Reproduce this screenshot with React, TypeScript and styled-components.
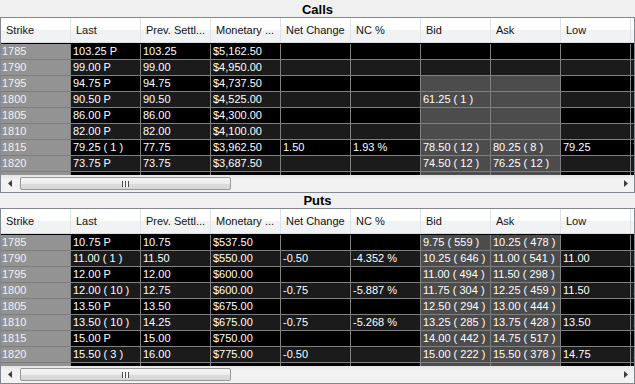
import styled, { createGlobalStyle } from "styled-components"

const GlobalStyle = createGlobalStyle`
  html, body { margin: 0; padding: 0; background: #f0f0f0; }
  body { font-family: "Liberation Sans", Arial, sans-serif; }
`

type Tone = "strike" | "black" | "dark" | "gray"

type row_type = {
    strike: string,
    cells: string[],
    quote: boolean
}

const HEADERS = ["Strike", "Last", "Prev. Settl...", "Monetary ...", "Net Change", "NC %", "Bid", "Ask", "Low", "High"]

const CALLS: row_type[] = [
    { strike: "1785", cells: ["103.25 P", "103.25", "$5,162.50", "", "", "", "", "", ""], quote: false },
    { strike: "1790", cells: ["99.00 P", "99.00", "$4,950.00", "", "", "", "", "", ""], quote: false },
    { strike: "1795", cells: ["94.75 P", "94.75", "$4,737.50", "", "", "", "", "", ""], quote: true },
    { strike: "1800", cells: ["90.50 P", "90.50", "$4,525.00", "", "", "61.25 ( 1 )", "", "", ""], quote: true },
    { strike: "1805", cells: ["86.00 P", "86.00", "$4,300.00", "", "", "", "", "", ""], quote: true },
    { strike: "1810", cells: ["82.00 P", "82.00", "$4,100.00", "", "", "", "", "", ""], quote: true },
    { strike: "1815", cells: ["79.25 ( 1 )", "77.75", "$3,962.50", "1.50", "1.93 %", "78.50 ( 12 )", "80.25 ( 8 )", "79.25", "79.25"], quote: true },
    { strike: "1820", cells: ["73.75 P", "73.75", "$3,687.50", "", "", "74.50 ( 12 )", "76.25 ( 12 )", "", ""], quote: true },
    { strike: "1825", cells: ["69.75 P", "69.75", "$3,487.50", "", "", "", "", "", ""], quote: true },
]

const PUTS: row_type[] = [
    { strike: "1785", cells: ["10.75 P", "10.75", "$537.50", "", "", "9.75 ( 559 )", "10.25 ( 478 )", "", ""], quote: true },
    { strike: "1790", cells: ["11.00 ( 1 )", "11.50", "$550.00", "-0.50", "-4.352 %", "10.25 ( 646 )", "11.00 ( 541 )", "11.00", "11.00"], quote: true },
    { strike: "1795", cells: ["12.00 P", "12.00", "$600.00", "", "", "11.00 ( 494 )", "11.50 ( 298 )", "", ""], quote: true },
    { strike: "1800", cells: ["12.00 ( 10 )", "12.75", "$600.00", "-0.75", "-5.887 %", "11.75 ( 304 )", "12.25 ( 459 )", "11.50", "12.00"], quote: true },
    { strike: "1805", cells: ["13.50 P", "13.50", "$675.00", "", "", "12.50 ( 294 )", "13.00 ( 444 )", "", ""], quote: true },
    { strike: "1810", cells: ["13.50 ( 10 )", "14.25", "$675.00", "-0.75", "-5.268 %", "13.25 ( 285 )", "13.75 ( 428 )", "13.50", "13.50"], quote: true },
    { strike: "1815", cells: ["15.00 P", "15.00", "$750.00", "", "", "14.00 ( 442 )", "14.75 ( 517 )", "", ""], quote: true },
    { strike: "1820", cells: ["15.50 ( 3 )", "16.00", "$775.00", "-0.50", "", "15.00 ( 222 )", "15.50 ( 378 )", "14.75", "15.50"], quote: true },
    { strike: "1825", cells: ["17.00 P", "17.00", "$850.00", "", "", "16.25 ( 310 )", "16.75 ( 402 )", "", ""], quote: true },
]

const Page = styled.div`
    width: 635px;
    height: 384px;
    overflow: hidden;
    display: flex;
    flex-direction: column;
    background: #f0f0f0;
`

const Section = styled.section`
    display: flex;
    flex-direction: column;
`

const Title = styled.div<{ $h: number }>`
    height: ${({ $h }) => $h}px;
    display: flex;
    align-items: center;
    justify-content: center;
    padding-top: ${({ $h }) => ($h > 15 ? 2 : 0)}px;
    box-sizing: border-box;
    font-size: 13px;
    font-weight: bold;
    color: #000;
`

const Frame = styled.div`
    border: 1px solid #828790;
    display: flex;
    flex-direction: column;
    overflow: hidden;
    background: #fff;
`

const HeaderRow = styled.div`
    display: flex;
    height: 24px;
    border-bottom: 1px solid #d9dbde;
    background: linear-gradient(to bottom, #ffffff 0%, #ffffff 48%, #f1f2f4 48%, #f1f2f4 100%);
    overflow: hidden;
`

const HeadCell = styled.div`
    flex: 0 0 70px;
    box-sizing: border-box;
    border-right: 1px solid #dfe2e6;
    padding-left: 5px;
    font-size: 11px;
    line-height: 24px;
    color: #111;
    white-space: nowrap;
    overflow: hidden;
`

const Body = styled.div`
    height: 132px;
    padding-top: 1px;
    box-sizing: border-box;
    background: #000;
    overflow: hidden;
`

const Row = styled.div`
    display: flex;
    height: 16px;
`

const toneColor: Record<Tone, string> = {
    strike: "#939393",
    black: "#000000",
    dark: "#1b1b1b",
    gray: "#4c4c4c",
}

const Cell = styled.div<{ $tone: Tone }>`
    flex: 0 0 70px;
    box-sizing: border-box;
    height: 16px;
    padding-left: ${({ $tone }) => ($tone === "strike" ? 1 : 2)}px;
    border-right: 1px solid #808080;
    border-bottom: 1px solid ${({ $tone }) => ($tone === "strike" ? "#7d7d7d" : "#808080")};
    background: ${({ $tone }) => toneColor[$tone]};
    color: ${({ $tone }) => ($tone === "strike" ? "#f2f2f2" : "#ffffff")};
    font-size: 11px;
    line-height: 15px;
    white-space: nowrap;
    overflow: hidden;
`

const ScrollBar = styled.div`
    height: 17px;
    display: flex;
    align-items: center;
    background: linear-gradient(to bottom, #e6e6e6 0%, #f2f2f2 30%, #f2f2f2 100%);
`

const ArrowButton = styled.div`
    flex: 0 0 17px;
    height: 17px;
    display: flex;
    align-items: center;
    justify-content: center;
`

const Thumb = styled.div`
    width: 211px;
    height: 13px;
    margin-left: 2px;
    box-sizing: border-box;
    border: 1px solid #979797;
    border-radius: 2px;
    background: linear-gradient(to bottom, #f6f6f6 0%, #ececec 50%, #dcdcdc 51%, #d6d6d6 100%);
    display: flex;
    align-items: center;
    justify-content: center;
`

const Grip = styled.span`
    width: 7px;
    height: 6px;
    background: repeating-linear-gradient(to right, #4a4a4a 0, #4a4a4a 1px, #f4f4f4 1px, #f4f4f4 3px);
`

const Spacer = styled.div`
    flex: 1;
`

function Arrow({ dir }: { dir: "left" | "right" }) {
    const pts = dir === "left" ? "4,0 4,7 0,3.5" : "0,0 0,7 4,3.5"
    return (
        <svg width="4" height="7" viewBox="0 0 4 7">
            <polygon points={pts} fill="#3c3c3c" />
        </svg>
    )
}

function rowTone(i: number, col: number, quote: boolean): Tone {
    if (quote && (col === 5 || col === 6)) return "gray"
    return i % 2 === 0 ? "black" : "dark"
}

function ChainGrid({ title, titleHeight, rows }: { title: string, titleHeight: number, rows: row_type[] }) {
    return (
        <Section>
            <Title $h={titleHeight}>{title}</Title>
            <Frame>
                <HeaderRow>
                    {HEADERS.map(h => <HeadCell key={h}>{h}</HeadCell>)}
                </HeaderRow>
                <Body>
                    {rows.map((r, i) => (
                        <Row key={r.strike}>
                            <Cell $tone="strike">{r.strike}</Cell>
                            {r.cells.map((c, j) => (
                                <Cell key={j} $tone={rowTone(i, j, r.quote)}>{c}</Cell>
                            ))}
                        </Row>
                    ))}
                </Body>
                <ScrollBar>
                    <ArrowButton><Arrow dir="left" /></ArrowButton>
                    <Thumb><Grip /></Thumb>
                    <Spacer />
                    <ArrowButton><Arrow dir="right" /></ArrowButton>
                </ScrollBar>
            </Frame>
        </Section>
    )
}

export default function App() {
    return (
        <>
            <GlobalStyle />
            <Page>
                <ChainGrid title="Calls" titleHeight={17} rows={CALLS} />
                <ChainGrid title="Puts" titleHeight={15} rows={PUTS} />
            </Page>
        </>
    )
}
